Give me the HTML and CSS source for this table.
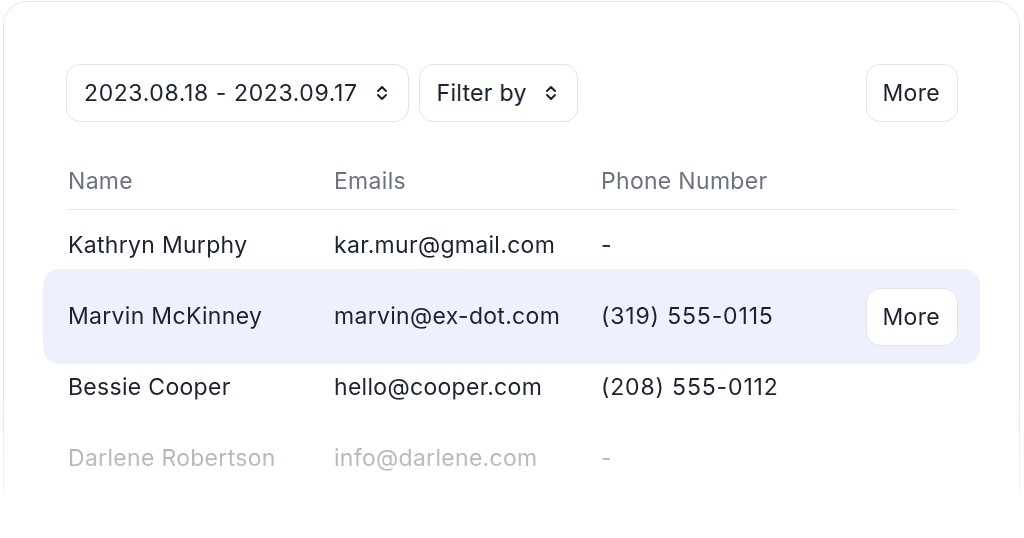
FILE: index.html
```html
<!DOCTYPE html>
<html lang="en">
<head>
  <meta charset="UTF-8">
  <title>Contacts</title>
  <meta name="viewport" content="width=device-width, initial-scale=1.0">
  <link rel="stylesheet" href="styles.css">
</head>
<body>
  <div class="card">
    <div class="toolbar">
      <button class="btn">
        <span class="num">2023.08.18 - 2023.09.17</span>
        <svg class="chevrons" width="12" height="16" viewBox="0 0 12 16"><path d="M2 6l4-4 4 4M2 10l4 4 4-4" fill="none" stroke="currentColor" stroke-width="2" stroke-linecap="round" stroke-linejoin="round"/></svg>
      </button>
      <button class="btn">
        Filter by
        <svg class="chevrons" width="12" height="16" viewBox="0 0 12 16"><path d="M2 6l4-4 4 4M2 10l4 4 4-4" fill="none" stroke="currentColor" stroke-width="2" stroke-linecap="round" stroke-linejoin="round"/></svg>
      </button>
      <button class="btn btn-more">More</button>
    </div>

    <div class="table">
      <div class="row head">
        <span>Name</span>
        <span>Emails</span>
        <span>Phone Number</span>
      </div>
      <div class="row">
        <span>Kathryn Murphy</span>
        <span>kar.mur@gmail.com</span>
        <span>-</span>
      </div>
      <div class="row active">
        <span>Marvin McKinney</span>
        <span>marvin@ex-dot.com</span>
        <span class="phone">(319) 555-0115</span>
        <button class="btn">More</button>
      </div>
      <div class="row">
        <span>Bessie Cooper</span>
        <span>hello@cooper.com</span>
        <span class="phone">(208) 555-0112</span>
      </div>
      <div class="row muted">
        <span>Darlene Robertson</span>
        <span>info@darlene.com</span>
        <span>-</span>
      </div>
    </div>
  </div>
</body>
</html>
```

FILE: styles.css
```css
body {
  margin: 0;
  padding: 0;
  background: #fff;
  font-family: 'Inter', 'Noto Sans', sans-serif;
  letter-spacing: 0.3px;
  color: #1b2232;
  overflow: hidden;
}
.card {
  margin: 1px 4px 0 3px;
  height: 490px;
  box-sizing: border-box;
  border: 1px solid #e7e7ea;
  border-bottom: none;
  border-radius: 24px 24px 0 0;
  padding: 62px 61px 0 62px;
  -webkit-mask-image: linear-gradient(to bottom, #000 80%, rgba(0,0,0,0.55) 100%);
  mask-image: linear-gradient(to bottom, #000 80%, rgba(0,0,0,0.55) 100%);
}
.toolbar {
  display: flex;
  gap: 10px;
}
.btn {
  height: 58px;
  display: inline-flex;
  align-items: center;
  gap: 18px;
  padding: 0 20px 0 17px;
  background: #fff;
  border: 1px solid #e2e3e6;
  border-radius: 14px;
  font: inherit;
  font-size: 23px;
  letter-spacing: 0.3px;
  color: #1b2232;
  white-space: nowrap;
  cursor: pointer;
}
.btn-more {
  margin-left: auto;
  padding: 0 17px 0 16px;
}
.num { letter-spacing: 0.6px; }
.phone { letter-spacing: 0.85px; }
.chevrons { flex: none; }
.table {
  margin: 45px 2px 0 2px;
}
.row {
  display: grid;
  grid-template-columns: 266px 267px 1fr auto;
  align-items: center;
  height: 71px;
  font-size: 23px;
  line-height: 28px;
}
.row.head {
  height: auto;
  padding-bottom: 14px;
  border-bottom: 1px solid #e5e6e9;
  color: #6b7280;
}
.row:not(.head) span {
  position: relative;
  top: -1px;
}
.row.active {
  height: 95px;
  margin: -12px -24px -12px -25px;
  padding: 0 22px 0 25px;
  background: #eef1fd;
  border-radius: 16px;
}
.row.active .btn {
  padding: 0 17px 0 16px;
}
.row.muted {
  color: #979ca4;
}
```
